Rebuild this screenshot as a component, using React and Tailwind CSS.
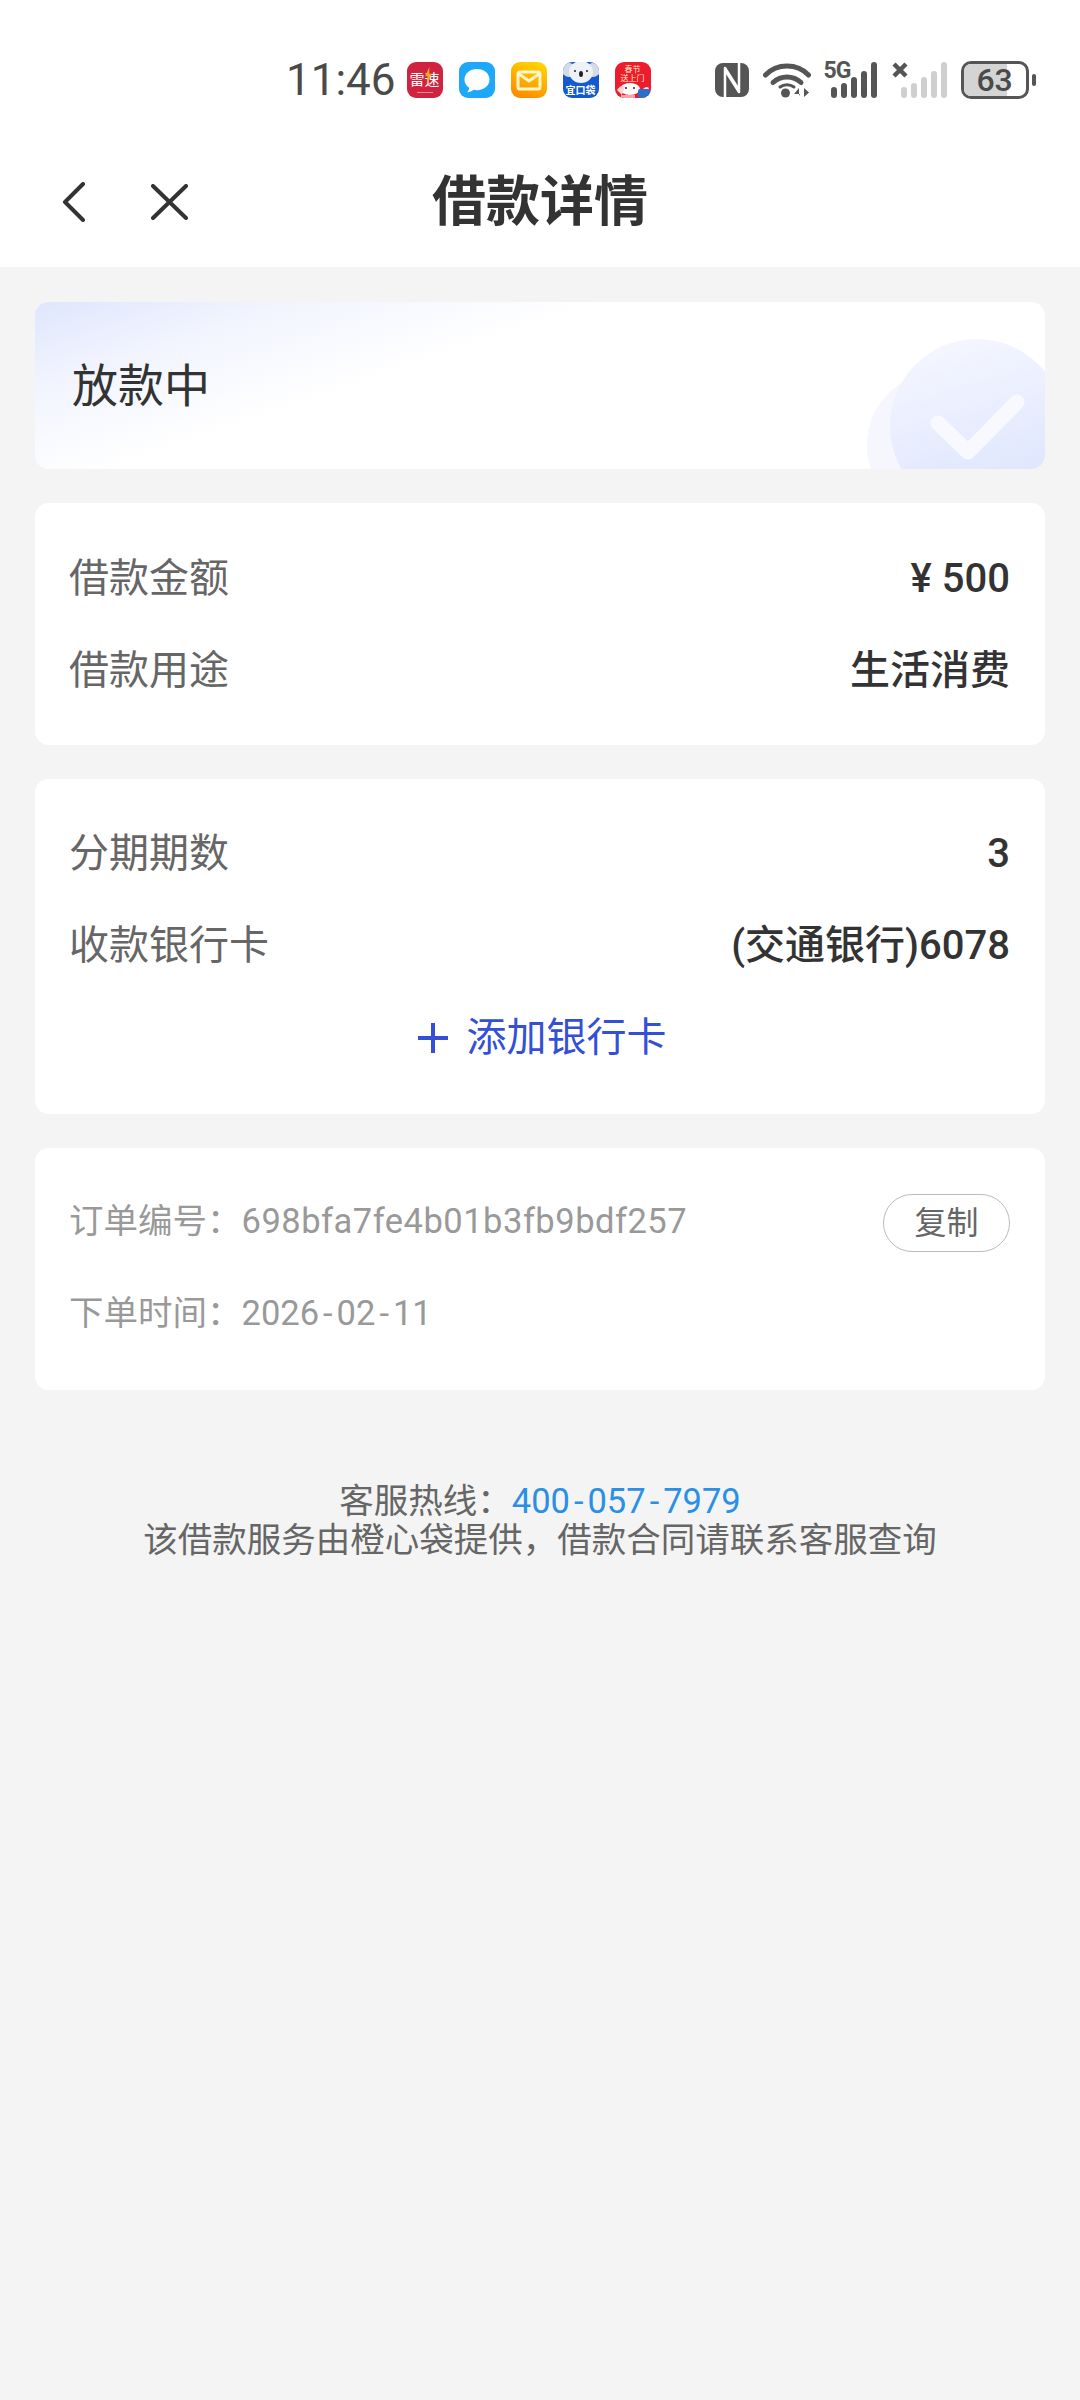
const cjk = "font-['Roboto','Noto_Sans_CJK_SC',sans-serif]"

function Dash() {
  return <span className="mx-[4px]">-</span>
}

function AppIcons() {
  return (
    <div className="ml-[11px] flex items-center gap-4">
      {/* 雷速 */}
      <div className="relative flex h-9 w-9 items-center justify-center overflow-hidden rounded-[9px] bg-[#cf2340] pb-1">
        <span className="font-['Noto_Sans_CJK_SC',sans-serif] text-[15px] leading-none tracking-[0px] text-white">雷速</span>
        <svg viewBox="0 0 10 20" className="absolute left-[17px] top-[5px] h-[17px] w-[9px]">
          <path d="M6 0 1 11h3l-1 9 6-12H6z" fill="#f5a623" />
        </svg>
        <div className="absolute bottom-[5px] left-[10px] h-px w-4 bg-[#e88a98]" />
      </div>
      {/* messages */}
      <svg viewBox="0 0 36 36" className="h-9 w-9">
        <rect width="36" height="36" rx="9" fill="#1ea8fb" />
        <path d="M18 7c-7.2 0-12.5 4.6-12.5 10.6 0 3.5 1.8 6.5 4.8 8.4-.3 1.700-1.100 3.200-2.300 4.300 2.600-.1 4.900-1 6.600-2.500 1.100.3 2.200.4 3.400.4 7.200 0 12.500-4.600 12.500-10.600S25.200 7 18 7z" fill="#fff" />
      </svg>
      {/* mail */}
      <svg viewBox="0 0 36 36" className="h-9 w-9">
        <defs>
          <linearGradient id="mailBg" x1="0.7" y1="0" x2="0.3" y2="1">
            <stop offset="0" stopColor="#fdd400" />
            <stop offset="1" stopColor="#fe8a00" />
          </linearGradient>
        </defs>
        <rect width="36" height="36" rx="9" fill="url(#mailBg)" />
        <rect x="7" y="10" width="22" height="17" rx="2" fill="none" stroke="#fff6c8" strokeWidth="3" />
        <path d="M8 12l10 7 10-7" fill="none" stroke="#fff6c8" strokeWidth="3" />
      </svg>
      {/* koala */}
      <div className="relative flex h-9 w-9 flex-col items-center justify-end overflow-hidden rounded-[9px] bg-[#1459d2] pb-[2px]">
        <svg viewBox="0 0 36 22" className="absolute left-0 top-0 h-[22px] w-9">
          <circle cx="6" cy="8" r="7" fill="#d5dbe6" />
          <circle cx="30" cy="8" r="7" fill="#d5dbe6" />
          <ellipse cx="18" cy="10" rx="12" ry="11" fill="#eef1f6" />
          <ellipse cx="18" cy="12" rx="2" ry="3" fill="#222" />
          <circle cx="12" cy="9" r="1" fill="#222" />
          <circle cx="24" cy="9" r="1" fill="#222" />
        </svg>
        <span className="font-['Noto_Sans_CJK_SC',sans-serif] text-[10px] font-bold leading-[12px] text-white">宜口袋</span>
      </div>
      {/* festival */}
      <div className="relative flex h-9 w-9 flex-col items-center overflow-hidden rounded-[9px] bg-[#ec1c2c] pt-[2px]">
        <span className="font-['Noto_Sans_CJK_SC',sans-serif] text-[8px] leading-[9px] text-[#ffe9c9]">春节</span>
        <span className="font-['Noto_Sans_CJK_SC',sans-serif] text-[8px] leading-[9px] text-[#ffe9c9]">送上门</span>
        <svg viewBox="0 0 36 18" className="absolute bottom-0 left-0 h-[18px] w-9">
          <ellipse cx="15" cy="9" rx="10" ry="6" fill="#fff" />
          <path d="M2 10c2-4 6-5 8-4l-3 9zM28 9c2-2 4-3 6-1l-4 8z" fill="#fbd6d6" />
          <circle cx="11" cy="8" r="1" fill="#222" />
          <circle cx="19" cy="8" r="1" fill="#222" />
          <path d="M6 15h14v3H6z" fill="#f6a5a5" />
          <rect x="23" y="9" width="12" height="9" rx="2" fill="#2b6fc7" />
        </svg>
      </div>
    </div>
  )
}

function SystemIcons() {
  return (
    <div className="ml-[64px] flex items-center">
      {/* nfc */}
      <svg viewBox="0 0 34 34" className="h-[34px] w-[34px]">
        <rect width="34" height="34" rx="8" fill="#555" />
        <path d="M10 34V5l14 22" fill="none" stroke="#fff" strokeWidth="2.500" strokeLinejoin="round" />
        <path d="M24 0v29L10 7" fill="none" stroke="#fff" strokeWidth="2.500" strokeLinejoin="round" />
      </svg>
      {/* wifi */}
      <svg viewBox="0 0 48 36" className="ml-[14px] h-9 w-12">
        <path d="M2.500 13C14 1 34 1 45.500 13" fill="none" stroke="#555" strokeWidth="5" strokeLinecap="round" />
        <path d="M10 20.500c8-7.500 20-7.500 28 0" fill="none" stroke="#555" strokeWidth="5" strokeLinecap="round" />
        <circle cx="22.500" cy="31" r="4.500" fill="#555" />
        <path d="M17 25c4-3 10-3 14 0" fill="none" stroke="#555" strokeWidth="3" strokeLinecap="round" />
        <path d="M36 34v-8l-5 6h6M41 26v9l5-4.500z" fill="#555" />
      </svg>
      {/* 5G signal */}
      <div className="relative ml-[13px] h-9 w-[55px]">
        <span className="absolute left-0 top-[-3px] font-['Roboto',sans-serif] text-[23px] font-bold leading-[24px] tracking-[-1px] text-[#555]">5G</span>
        <svg viewBox="0 0 55 36" className="h-9 w-[55px]">
          <rect x="7" y="25" width="6" height="11" rx="3" fill="#555" />
          <rect x="17" y="21" width="6" height="15" rx="3" fill="#555" />
          <rect x="27" y="15" width="6" height="21" rx="3" fill="#555" />
          <rect x="37" y="9" width="6" height="27" rx="3" fill="#555" />
          <rect x="47" y="0" width="6" height="36" rx="3" fill="#555" />
        </svg>
      </div>
      {/* second sim, no service */}
      <svg viewBox="0 0 55 36" className="ml-[13px] h-9 w-[55px]">
        <path d="M2 2l12 12M14 2 2 14" stroke="#555" strokeWidth="4.500" />
        <rect x="9" y="25" width="6" height="11" rx="3" fill="#cfcfcf" />
        <rect x="19" y="21" width="6" height="15" rx="3" fill="#cfcfcf" />
        <rect x="29" y="15" width="6" height="21" rx="3" fill="#cfcfcf" />
        <rect x="39" y="9" width="6" height="27" rx="3" fill="#cfcfcf" />
        <rect x="49" y="0" width="6" height="36" rx="3" fill="#cfcfcf" />
      </svg>
      {/* battery */}
      <div className="relative ml-[14px] flex h-[38px] w-[68px] items-center justify-center overflow-hidden rounded-[10px] border-[3px] border-[#555]">
        <div className="absolute inset-y-0 left-0 w-[70%] bg-[#d4d4d4]" />
        <span className="relative font-['Roboto',sans-serif] text-[32px] font-medium leading-none text-[#4a4a4a]">63</span>
      </div>
      <div className="ml-[3px] h-[12px] w-[4px] rounded-full bg-[#555]" />
    </div>
  )
}

function Row({ label, value }) {
  return (
    <div className="flex h-[92px] items-center justify-between">
      <span className="text-[#666]">{label}</span>
      <span className="font-medium text-[#333]">{value}</span>
    </div>
  )
}

export default function App() {
  return (
    <div className={`min-h-[2400px] bg-[#f4f4f4] ${cjk}`}>
      <header className="h-[267px] bg-white">
        <div className="flex h-[160px] items-center pl-[286px]">
          <span className="font-['Roboto',sans-serif] text-[44px] leading-none text-[#4a4a4a]">11:46</span>
          <AppIcons />
          <SystemIcons />
        </div>
        <div className="relative flex h-[80px] items-center justify-center">
          <svg viewBox="0 0 23 40" className="absolute left-[62px] top-[22px] h-10 w-[23px]">
            <path d="M21 2 3 20l18 18" fill="none" stroke="#333" strokeWidth="4" strokeLinecap="round" strokeLinejoin="round" />
          </svg>
          <svg viewBox="0 0 37 36" className="absolute left-[151px] top-[24px] h-9 w-[37px]">
            <path d="M2 2l33 32M35 2 2 34" fill="none" stroke="#333" strokeWidth="4" strokeLinecap="round" />
          </svg>
          <h1 className="pt-[5px] text-[54px] font-bold leading-none text-[#333]">借款详情</h1>
        </div>
      </header>

      <main className="flex flex-col gap-[34px] px-[35px] pt-[35px] text-[40px]">
        <section className="relative flex h-[167px] items-center overflow-hidden rounded-[14px] bg-[linear-gradient(161deg,#dfe6fd_0%,#f1f4fe_16%,#ffffff_38%)] pl-[37px]">
          <span className="text-[46px] leading-none text-[#333]">放款中</span>
          <svg viewBox="0 0 178 168" className="absolute bottom-0 right-0 h-[168px] w-[178px]">
            <defs>
              <linearGradient id="badge" x1="0.4" y1="0" x2="0.7" y2="1">
                <stop offset="0" stopColor="#f4f6ff" />
                <stop offset="1" stopColor="#dbe3fd" />
              </linearGradient>
            </defs>
            <circle cx="73" cy="144" r="73" fill="#f5f6fe" />
            <circle cx="110" cy="125" r="87" fill="url(#badge)" />
            <path d="M71 122l30 29 49-50" fill="none" stroke="#f8f9ff" strokeWidth="15" strokeLinecap="round" strokeLinejoin="round" />
          </svg>
        </section>

        <section className="h-[242px] rounded-[14px] bg-white pl-[34px] pr-[35px] pt-[30px]">
          <Row label="借款金额" value="¥ 500" />
          <Row label="借款用途" value="生活消费" />
        </section>

        <section className="h-[335px] rounded-[14px] bg-white pl-[34px] pr-[35px] pt-[29px]">
          <Row label="分期期数" value="3" />
          <Row label="收款银行卡" value="(交通银行)6078" />
          <div className="flex h-[92px] items-center justify-center gap-[19px] pl-[5px] text-[#3350d6]">
            <svg viewBox="0 0 30 30" className="h-[30px] w-[30px]">
              <path d="M15 0v30M0 15h30" stroke="#3350d6" strokeWidth="4" />
            </svg>
            <span>添加银行卡</span>
          </div>
        </section>

        <section className="h-[242px] rounded-[14px] bg-white pl-[34px] pr-[35px] pt-[46px] text-[34.5px] text-[#999]">
          <div className="flex h-[58px] items-center justify-between">
            <span className="mb-[2px]">
              订单编号：<span className="tracking-[0.5px]">698bfa7fe4b01b3fb9bdf257</span>
            </span>
            <button className="h-[58px] w-[127px] rounded-full border border-[#bbb] text-[32px] leading-none text-[#666]">复制</button>
          </div>
          <div className="mt-[46px] leading-[30px]">下单时间：2026<Dash />02<Dash />11</div>
        </section>
      </main>

      <footer className="mt-[92px] text-center text-[34.5px] leading-[39px] text-[#666]">
        <div>
          客服热线：<span className="text-[#2b8fe6]">400<Dash />057<Dash />7979</span>
        </div>
        <div>该借款服务由橙心袋提供，借款合同请联系客服查询</div>
      </footer>
    </div>
  )
}
